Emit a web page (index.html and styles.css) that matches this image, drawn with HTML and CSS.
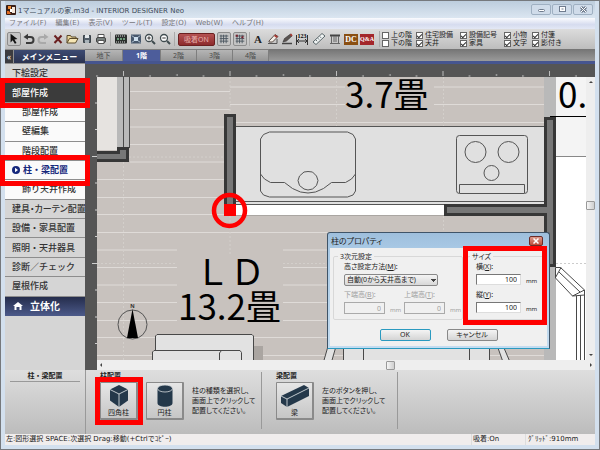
FILE: index.html
```html
<!DOCTYPE html>
<html lang="ja">
<head>
<meta charset="utf-8">
<title>1マニュアルの家.m3d - INTERIOR DESIGNER Neo</title>
<link rel="stylesheet" href="styles.css">
</head>
<body>
<div class="window">
  <header class="titlebar">
    <svg class="app-icon" width="10" height="10" viewBox="0 0 10 10" aria-hidden="true"><rect width="10" height="10" rx="1" fill="#3a2018"/><rect x="2" y="1" width="3" height="3" fill="#f08a30"/><rect x="6" y="2" width="3" height="6" fill="#f4e6d8"/><path d="M1 9V6h2l2 3z" fill="#e06a20"/><path d="M4 4h2v3H4z" fill="#fff"/></svg>
    <h1>1マニュアルの家.m3d - INTERIOR DESIGNER Neo</h1>
    <div class="window-buttons">
      <button aria-label="最小化"><svg width="18" height="9" viewBox="0 0 18 9"><rect x="6.500" y="4.500" width="6" height="2" rx="1" fill="#fff" stroke="#6f7c8e"/></svg></button>
      <button aria-label="元に戻す"><svg width="18" height="9" viewBox="0 0 18 9"><rect x="6.500" y="1.500" width="6" height="5" fill="#fff" stroke="#6f7c8e"/><path d="M8.500 4h2" stroke="#6f7c8e"/></svg></button>
      <button aria-label="閉じる"><svg width="18" height="9" viewBox="0 0 18 9"><path d="M7 2l5 5M12 2L7 7" stroke="#6f7c8e" stroke-width="3"/><path d="M7 2l5 5M12 2L7 7" stroke="#fff"/></svg></button>
    </div>
  </header>

  <nav class="menubar" aria-label="メニュー">
    <a href="#">ファイル(F)</a><a href="#">編集(E)</a><a href="#">表示(V)</a><a href="#">ツール(T)</a><a href="#">設定(O)</a><a href="#">Web(W)</a><a href="#">ヘルプ(H)</a>
  </nav>

  <div class="toolbar">
    <div class="tools tools-file">
      <button class="tool pressed" aria-label="選択"><svg viewBox="0 0 14 14"><path d="M3 1l8 6-3.500.6 2.500 4-2 1-2.500-4L3 11z" fill="#111"/></svg></button>
      <button class="tool" aria-label="元に戻す"><svg viewBox="0 0 14 14"><path d="M4 5h4.500a2.600 2.600 0 0 1 0 6H4" fill="none" stroke="#3a3a3a" stroke-width="2"/><path d="M1.500 5L6 1.800v6z" fill="#3a3a3a"/></svg></button>
      <button class="tool" aria-label="やり直し"><svg viewBox="0 0 14 14"><path d="M10 5H5.500a2.600 2.600 0 0 0 0 6H10" fill="none" stroke="#a9a9a9" stroke-width="2"/><path d="M12.500 5L8 1.800v6z" fill="#a9a9a9"/></svg></button>
      <button class="tool" aria-label="削除"><svg viewBox="0 0 14 14"><path d="M3.500 3.500l7 7.500M10.500 3.500l-7 7.500" stroke="#6b2020" stroke-width="2"/></svg></button>
      <button class="tool" aria-label="開く"><svg viewBox="0 0 14 14"><path d="M2 11V3.500h3.500l1 1.500H11v2" fill="#e8d49a" stroke="#5a4a2a"/><path d="M2 11l2.500-4.500H13L10.500 11z" fill="#f6e6b4" stroke="#5a4a2a"/></svg></button>
      <button class="tool" aria-label="保存"><svg viewBox="0 0 14 14"><path d="M3.500 3.500h7v7h-7z" fill="#55606a" stroke="#3a4248"/><path d="M5 3h4v3H5z" fill="#e4e8ea"/><path d="M5 8h4v3H5z" fill="#aab4ba"/></svg></button>
      <button class="tool" aria-label="印刷"><svg viewBox="0 0 14 14"><path d="M4 2.500h6V6H4z" fill="#fff" stroke="#555"/><rect x="2.500" y="5.500" width="9" height="5" rx="1.500" fill="#77807e" stroke="#444"/><path d="M4 8.500h6v3H4z" fill="#fff" stroke="#555"/></svg></button>
    </div>
    <div class="tools tools-view">
      <button class="tool" aria-label="3D表示"><svg viewBox="0 0 14 14"><rect x="1" y="2.500" width="12" height="9" rx="1" fill="#2b2f2d"/><path d="M2 4h10M2 10h10" stroke="#ddd" stroke-dasharray="1 1"/><path d="M3 6h2v2H3zM6 6h2v2H6zM9 6h2v2H9z" fill="#6d9a7a"/></svg></button>
      <button class="tool" aria-label="全体表示"><svg viewBox="0 0 14 14"><rect x="2" y="2.500" width="10" height="9" fill="#48586c"/><rect x="5" y="5" width="4" height="4" fill="#cfe0ee"/><path d="M3 3.500l2 2M11 3.500l-2 2M3 10.500l2-2M11 10.500l-2-2" stroke="#cfe0ee"/></svg></button>
      <button class="tool" aria-label="拡大"><svg viewBox="0 0 14 14"><circle cx="6" cy="6" r="3.500" fill="#fff" stroke="#3f4b4f" stroke-width="1.300"/><path d="M9 9l3 3" stroke="#3f4b4f" stroke-width="2"/><path d="M4.300 6h3.400M6 4.300v3.400" stroke="#333"/></svg></button>
      <button class="tool" aria-label="縮小"><svg viewBox="0 0 14 14"><circle cx="6" cy="6" r="3.500" fill="#fff" stroke="#3f4b4f" stroke-width="1.300"/><path d="M9 9l3 3" stroke="#3f4b4f" stroke-width="2"/><path d="M4.300 6h3.400" stroke="#333"/></svg></button>
    </div>
    <div class="tools tools-snap">
      <button class="snap">吸着ON</button>
      <button class="tool pressed" aria-label="グリッド"><svg viewBox="0 0 14 14"><path d="M2 3.500h10M2 6.500h10M2 9.500h10M3.500 2v10M6.500 2v10M9.500 2v10" stroke="#46525c"/></svg></button>
      <button class="tool pressed" aria-label="グリッド吸着"><svg viewBox="0 0 14 14"><path d="M2 3.500h10M2 6.500h10M2 9.500h10M3.500 2v10M6.500 2v10M9.500 2v10" stroke="#46525c"/><path d="M2 2h2.500v2.500H2zM8 5l3-2v4z" fill="#7a2430"/></svg></button>
    </div>
    <div class="tools tools-draw">
      <button class="tool letter">A</button>
      <button class="tool" aria-label="消しゴム"><svg viewBox="0 0 14 14"><path d="M2 11.500h9V7" fill="none" stroke="#555"/><path d="M3 9l6-6.500 3 2L6.500 10H3z" fill="#f4efe8" stroke="#5a4b44"/><path d="M9 2.500l3 2L10.500 6 8 4z" fill="#a63a34"/></svg></button>
      <button class="tool" aria-label="ペン"><svg viewBox="0 0 14 14"><path d="M2 11.500h10" stroke="#444" stroke-width="1.500"/><path d="M3 10l1.500-3.500 6-4.500 1.500 2-5.500 5z" fill="#5a5350" stroke="#333" stroke-width=".6"/><path d="M10.500 2l1.500 2" stroke="#a63a34" stroke-width="1.500"/></svg></button>
      <button class="tool" aria-label="寸法"><svg viewBox="0 0 14 14"><path d="M1.500 3v10M12.500 3v10M1.500 9h11" fill="none" stroke="#333"/><path d="M4 7l-2 2 2 2M10 7l2 2-2 2" fill="none" stroke="#333"/><text x="7" y="6" class="dimension" text-anchor="middle">123</text></svg></button>
    </div>
    <div class="tools tools-misc">
      <button class="tool" aria-label="定規"><svg viewBox="0 0 14 14"><path d="M1 10l9-8.500 3 2.500-9 8.500z" fill="#f0f4f4" stroke="#586468"/><path d="M4 8l1 1.200M6 6.300l1 1.200M8 4.600l1 1.200" stroke="#586468"/></svg></button>
      <button class="tool" aria-label="一覧"><svg viewBox="0 0 14 14"><rect x="2" y="2.500" width="10" height="2" fill="#444"/><path d="M3.500 4v7M6 4v6M8 4v6M10.500 4v7M2 11.500h10" stroke="#666" fill="none"/></svg></button>
      <button class="tool badge dc">DC</button>
      <button class="tool badge qa">Q&amp;A</button>
    </div>
    <fieldset class="layers" aria-label="表示項目">
      <label><input type="checkbox">上の階</label>
      <label><input type="checkbox" checked>住宅設備</label>
      <label><input type="checkbox" checked>設備記号</label>
      <label><input type="checkbox" checked>小物</label>
      <label><input type="checkbox" checked>付箋</label>
      <label><input type="checkbox">下の階</label>
      <label><input type="checkbox" checked>天井</label>
      <label><input type="checkbox" checked>家具</label>
      <label><input type="checkbox" checked>文字</label>
      <label><input type="checkbox" checked>影付き</label>
    </fieldset>
  </div>

  <div class="main">
    <aside class="sidebar">
      <div class="side-head"><button aria-label="折りたたむ">«</button><h2>メインメニュー</h2></div>
      <nav class="side-menu" aria-label="メインメニュー">
        <a href="#">下絵設定</a>
        <a href="#" class="open">部屋作成</a>
        <a href="#" class="sub">部屋作成</a>
        <a href="#" class="sub">壁編集</a>
        <a href="#" class="sub">階段配置</a>
        <a href="#" class="sub current"><svg width="8" height="8" viewBox="0 0 8 8" aria-hidden="true"><circle cx="4" cy="4" r="4" fill="#15277c"/><path d="M3 1.800L6 4 3 6.200z" fill="#fff"/></svg>柱・梁配置</a>
        <a href="#" class="sub">飾り天井作成</a>
        <a href="#" class="tight">建具・カーテン配置</a>
        <a href="#">設備・家具配置</a>
        <a href="#">照明・天井器具</a>
        <a href="#">診断／チェック</a>
        <a href="#">屋根作成</a>
        <a href="#" class="solid"><svg width="10" height="8" viewBox="0 0 10 8" aria-hidden="true"><path d="M5 0l5 4H8.500v4h-2V5h-3v3h-2V4H0z" fill="#fff"/></svg>立体化</a>
      </nav>
    </aside>

    <section class="workspace">
      <div class="tabs" role="tablist">
        <button role="tab">地下</button><button role="tab" class="active" aria-selected="true">1階</button><button role="tab">2階</button><button role="tab">3階</button><button role="tab">4階</button>
      </div>
      <div class="editor">
        <svg class="ruler-top" aria-hidden="true">
          <defs><pattern id="ticks-x" x="38" width="106.500" height="13" patternUnits="userSpaceOnUse"><path d="M.5 7v5M27 11v2M54 10v2M80.500 11v2" stroke="#bcbcbc"/></pattern></defs>
          <rect width="100%" height="13" fill="url(#ticks-x)"/>
        </svg>
        <svg class="ruler-left" aria-hidden="true">
          <defs><pattern id="ticks-y" y="79" width="12" height="107" patternUnits="userSpaceOnUse"><path d="M7 .5h5M10 27h2M10 54h2M10 80.500h2" stroke="#cfcfcf"/></pattern></defs>
          <rect width="12" height="100%" fill="url(#ticks-y)"/>
        </svg>
        <svg class="plan" viewBox="97 77 489 283" preserveAspectRatio="xMinYMin slice" role="img" aria-label="間取り図">
          <rect x="97" y="77" width="489" height="283" fill="#c8c2be"/>
          <g stroke="#dfdbd8">
            <path d="M130 91.500h100M130 109.500h100M130 127h95M130 144.500h95M130 162h95M97 179.500h127M97 197.500h127M97 214.500h127M97 232.500h447M97 250h80M283 250h50M97 267.500h80M283 267.500h50M97 285h80M283 285h50M97 302.500h80M283 302.500h50M97 320.500h80M283 320.500h50M97 337.500h447M97 355.500h447"/>
            <path d="M230 87h115M434 87h110M230 104.500h115M434 104.500h110M230 122.500h314"/>
            <path d="M230 77v50M336.500 77v50M443.500 77v50M123.500 162v198M230 216v38M443.500 216v20M97 157h130M97 263.500h80M283 263.500h45" stroke="#d3cfcb" stroke-dasharray="2 2"/>
          </g>
          <rect x="97" y="77" width="20" height="73" fill="#e6e3e0"/>
          <rect x="117" y="77" width="12" height="72" fill="#b9b9b9"/>
          <path d="M123.500 77v71M129.500 77v71" stroke="#4a4a4a"/>
          <path d="M94 152.500h24.500v-4h9v12H94z" fill="#777" stroke="#373737" stroke-width="3"/>
          <rect x="544" y="77" width="12" height="283" fill="#b9b9b9"/>
          <rect x="556" y="77" width="30" height="80" fill="#f4f4f4"/>
          <rect x="556" y="157" width="30" height="203" fill="#fff"/>
          <path d="M556 156.500h30" stroke="#888"/>
          <path d="M556 263.500h30" stroke="#ccc" stroke-dasharray="2 2"/>
          <path d="M550 116.500h36" stroke="#000"/>
          <rect x="236" y="126" width="308" height="79" fill="#e0e0e0"/>
          <path d="M236 126.500h308M236 201.500h308M236 204.500h308" stroke="#555" fill="none"/>
          <rect x="236" y="205" width="208" height="10" fill="#fff"/>
          <path d="M236 215.500h208" stroke="#aaa6a2"/>
          <path d="M545.500 118.500h9v147h-9v-51h-100v-9h100z" fill="#777" stroke="#373737" stroke-width="3"/>
          <rect x="225.500" y="115.500" width="9" height="91" fill="#777" stroke="#373737" stroke-width="3"/>
          <g fill="none" stroke="#555">
            <path d="M260.500 139l3-4.500 6-2.500h78l5.500 2.500 2.500 4.500v52l-2.500 4-5.500 2h-78l-6-2-3-4z"/>
            <path d="M260.500 174l4 5 6 3.500h14l8 6 8 3.500 7.500 1 7.500-1 8-3.500 8-6h14l6-3.500 4-5"/>
            <path d="M304 172l-4.500 4-1.500 4.500 1.500 5 4.500 3.500 4 1 4.500-1 4-3.500 1.500-5-1.500-4.500-4-4-4.500-.5z"/>
            <rect x="456.500" y="135.500" width="71" height="58" rx="3"/>
            <path d="M459.500 193v-8.500h65v8.500"/>
            <circle cx="475.500" cy="152" r="10.500"/><circle cx="508.500" cy="152" r="10.500"/><circle cx="491.500" cy="173" r="7.500"/>
          </g>
          <circle cx="132.500" cy="324.500" r="14.500" fill="none" stroke="#555"/>
          <path d="M132.500 309l5.500 29h-11z" fill="#000"/>
          <text x="132.500" y="308" class="north" text-anchor="middle">N</text>
          <rect x="253" y="346" width="10" height="14" fill="#aaa5a1"/>
          <g fill="#e2e2e2" stroke="#484848">
            <path d="M155.500 362v-26l1.500-1.500h95l1.500 1.500v26z"/>
            <path d="M152.500 362v-10l1.500-1.500h86l1.500 2V362z"/>
            <path d="M219.500 362v-9l2-2.500" fill="none"/>
            <path d="M323.500 362l4-14h8l-4 14z"/>
            <path d="M343.500 345h146v17h-146zM363.500 345h106v17h-106z"/>
            <path d="M498 348h6l6 14h-7z"/>
            <path d="M555.500 267.500h5l24 22.500v5l-12 1-17-18z" fill="#fff"/>
            <path d="M561 267.500l-5.500 10M584.500 290l-12 6M559 272l21 20M576.500 296v66M580.500 295v67M584.500 295v67" fill="none"/>
          </g>
          <text x="345" y="108" class="room">3.7畳</text>
          <text x="558" y="108" class="room">0.</text>
          <text x="195" y="285" class="room">ＬＤ</text>
          <text x="178" y="320" class="room">13.2畳</text>
          <rect x="224" y="204" width="12" height="12" fill="#f00"/>
          <circle cx="229.500" cy="210.500" r="15.500" fill="none" stroke="#f00" stroke-width="4.500"/>
        </svg>
        <div class="scroll-y" aria-hidden="true"><i class="arrow up"></i><i class="thumb"></i><i class="arrow down"></i></div>
        <div class="scroll-x" aria-hidden="true"><i class="arrow left"></i><i class="thumb"></i><i class="arrow right"></i></div>
      </div>

      <form class="dialog" role="dialog" aria-labelledby="dialog-title">
        <div class="dialog-title"><h2 id="dialog-title">柱のプロパティ</h2><button type="button" aria-label="閉じる"><svg width="6" height="6" viewBox="0 0 6 6"><path d="M.5.5l5 5M5.500.5l-5 5" stroke="#fff" stroke-width="1.500"/></svg></button></div>
        <div class="dialog-body">
          <div class="groups">
            <fieldset class="group-3d">
              <legend>3次元設定</legend>
              <label for="method">高さ設定方法(<u>M</u>):</label>
              <select id="method"><option>自動(0から天井高まで)</option></select>
              <div class="pair">
                <div class="disabled"><label for="low">下端高(<u>B</u>):</label><div class="measure"><input id="low" value="0" disabled><span>mm</span></div></div>
                <div class="disabled"><label for="high">上端高(<u>T</u>):</label><div class="measure"><input id="high" value="0" disabled><span>mm</span></div></div>
              </div>
            </fieldset>
            <fieldset class="group-size">
              <legend>サイズ</legend>
              <label for="size-x">横(<u>X</u>):</label>
              <div class="measure"><input id="size-x" value="100"><span>mm</span></div>
              <label for="size-y">縦(<u>Y</u>):</label>
              <div class="measure"><input id="size-y" value="100"><span>mm</span></div>
            </fieldset>
          </div>
          <div class="actions"><button type="button" class="default">OK</button><button type="button">キャンセル</button></div>
        </div>
        <div class="mark mark-size"></div>
      </form>
    </section>
    <div class="mark mark-room"></div>
    <div class="mark mark-column"></div>
  </div>

  <div class="parts">
    <div class="parts-caption"><h2>柱・梁配置</h2></div>
    <section class="part-group">
      <h3>柱配置</h3>
      <div class="part-row">
        <div class="part-buttons">
          <button class="part"><svg width="20" height="24" viewBox="0 0 20 24" aria-hidden="true"><path d="M10 1l9 4.500v11L10 23l-9-6.500v-11z" fill="#24384a"/><path d="M1 5.500l9 4.500 9-4.500M10 10v13" fill="none" stroke="#e8ecee" stroke-width=".8"/></svg>四角柱<span class="mark mark-part"></span></button>
          <button class="part"><svg width="20" height="24" viewBox="0 0 20 24" aria-hidden="true"><path d="M2.500 5v14c0 5 15 5 15 0V5z" fill="#24384a"/><ellipse cx="10" cy="4.500" rx="7.500" ry="3.500" fill="#24384a" stroke="#d8dcde" stroke-width=".8"/></svg>円柱</button>
        </div>
        <p>柱の種類を選択し、<br>画面上でクリックして<br>配置してください。</p>
      </div>
    </section>
    <section class="part-group">
      <h3>梁配置</h3>
      <div class="part-row">
        <div class="part-buttons">
          <button class="part"><svg width="30" height="24" viewBox="0 0 30 24" aria-hidden="true"><path d="M1 12L24 1l5 3v8L7 23l-6-4z" fill="#24384a"/><path d="M1 12l6 3 22-11M7 15v8" fill="none" stroke="#e8ecee" stroke-width=".8"/></svg>梁</button>
        </div>
        <p>左のボタンを押し、<br>画面上でクリックして<br>配置してください。</p>
      </div>
    </section>
  </div>

  <footer class="status">
    <span class="hint">左:図形選択 SPACE:次選択 Drag:移動(+Ctrlでｺﾋﾟｰ)</span>
    <span class="snap-state">吸着:On</span>
    <span class="grid-state">ｸﾞﾘｯﾄﾞ:910mm</span>
  </footer>
</div>
</body>
</html>
```
FILE: styles.css
```css
* { box-sizing: border-box; }
body { margin: 0; font: 7px/10px "Noto Sans", "Noto Sans CJK JP", sans-serif; color: #222; }
button, input, select { font: inherit; color: inherit; margin: 0; padding: 0; border: 0; background: none; }
h1, h2, h3, p, fieldset, legend { margin: 0; padding: 0; border: 0; font-size: inherit; font-weight: normal; }
a { color: inherit; text-decoration: none; }
svg { display: block; }

.window { display: flex; flex-direction: column; min-height: 100vh; padding: 0 4px 4px; border: 1px solid #76797d; background: #d3e0ee; }
.titlebar, .menubar, .status { font-family: "DejaVu Sans", "Noto Sans CJK JP", sans-serif; }

.titlebar { display: flex; align-items: center; gap: 2px; height: 17px; padding-left: 1px; background: linear-gradient(#bdcddd, #dbe6f1); color: #3d4a58; }
.titlebar h1 { flex: 1; padding-top: 2px; white-space: nowrap; }
.window-buttons { display: flex; gap: 1px; padding-right: 2px; }
.window-buttons button { border: 1px solid #9fb0c2; border-radius: 2px; background: #d0dcea; }

.menubar { display: flex; gap: 9px; height: 11px; padding-left: 4px; background: linear-gradient(#fafbfe, #d6dcef 60%, #e3e8f5); color: #77777c; line-height: 11px; white-space: nowrap; }

.toolbar { display: flex; align-items: center; height: 20px; padding-left: 2px; background: linear-gradient(#dcdcdc, #bdbdbd); }
.tools { display: flex; flex: none; justify-content: space-between; align-items: center; }
.tools + .tools { margin-left: 2px; }
.tools-file { width: 101px; }
.tools-view { width: 62px; padding-left: 3px; border-left: 1px solid #aaa; }
.tools-snap { width: 73px; padding-left: 3px; border-left: 1px solid #aaa; }
.tools-draw { width: 60px; padding-left: 1px; border-left: 1px solid #aaa; }
.tools-misc { width: 63px; padding-left: 1px; }
.tool { width: 14px; height: 14px; }
.tool svg { width: 100%; height: 100%; }
.pressed { border: 1px solid #8c8c8c; border-radius: 2px; background: #c4c4c4; }
.snap { width: 37px; height: 13px; border: 1px solid #6b2020; border-radius: 2px; background: linear-gradient(#b55252, #8c2a2c); color: #e8b0ac; line-height: 11px; }
.letter { font: bold 11px/14px "Liberation Serif", serif; }
.dimension { font: bold 6px "Liberation Serif", serif; }
.badge { height: 11px; color: #fff; font: bold 8px/11px "Liberation Serif", serif; }
.dc { background: #8a4f12; }
.qa { background: #a3262b; font-size: 6px; }
.layers { display: grid; grid-template-columns: 34px 44px 44px 28px 30px; grid-auto-rows: 8px; margin-left: 5px; padding-left: 2px; border-left: 1px solid #aaa; line-height: 8px; }
.layers label { display: flex; align-items: center; gap: 2px; white-space: nowrap; }
.layers input { appearance: none; display: grid; place-items: center; flex: none; width: 7px; height: 7px; border: 1px solid #666; background: #fff; }
.layers input:checked::before { content: ""; width: 4px; height: 2px; border: solid #333; border-width: 0 0 1px 1px; transform: rotate(-45deg); }

.main { position: relative; display: flex; flex: 1; }
.sidebar { display: flex; flex: none; flex-direction: column; width: 80px; background: #d5d5d5; }
.side-head { display: flex; gap: 1px; height: 15px; padding: 1px 0; background: #909090; color: #fff; line-height: 13px; }
.side-head button { width: 8px; background: #3c3c40; font-size: 8px; line-height: 10px; }
.side-head h2 { flex: 1; background: linear-gradient(#3c4a72, #2b3350); font-size: 8px; font-weight: bold; text-align: center; }
.side-menu { display: grid; grid-auto-rows: 1fr; height: 252px; color: #333; font-size: 9px; font-weight: 500; line-height: 12px; }
.side-menu a { display: flex; align-items: center; padding-left: 7px; border-bottom: 1px solid #8d8d8d; white-space: nowrap; }
.side-menu .tight { font-feature-settings: "palt"; }
.side-menu .open { background: #3b3b3b; color: #fff; }
.side-menu .sub { padding-left: 17px; background: #fafafa; }
.side-menu .current { gap: 3px; padding-left: 7px; color: #15277c; font-weight: bold; }
.side-menu .solid { gap: 7px; padding-left: 8px; border: 0; background: linear-gradient(#252d4c, #4c5a8a); color: #fff; font-size: 10px; font-weight: bold; }

.workspace { position: relative; display: flex; flex: 1; flex-direction: column; min-width: 0; }
.tabs { display: flex; height: 15px; border-bottom: 3px solid #46558f; background: linear-gradient(#747474, #9a9a9a); }
.tabs button { width: 36px; border: 1px solid #7e7e7e; border-width: 1px 1px 0 0; background: linear-gradient(#b5b5b5, #969696); color: #4a4a4a; line-height: 11px; }
.tabs button:nth-child(-n+2) { width: 38px; }
.tabs .active { background: #4d5d9b; color: #fff; font-weight: bold; }

.editor { display: grid; flex: 1; grid-template-columns: 12px 1fr 9px; grid-template-rows: 13px 1fr 10px; background: #555; }
.ruler-top { grid-area: 1 / 1 / 2 / 4; width: 100%; height: 13px; }
.ruler-left { grid-area: 2 / 1 / 4 / 2; width: 12px; height: 100%; }
.plan { grid-area: 2 / 2; width: 100%; height: 100%; min-height: 0; }
.room { font: 35px "Noto Sans CJK JP", sans-serif; fill: #000; }
.north { font: bold 6px "Liberation Sans", sans-serif; fill: #333; }
.scroll-x, .scroll-y { display: flex; align-items: center; justify-content: space-between; background: #eee; }
.scroll-x { grid-area: 3 / 2 / 4 / 4; padding: 0 3px; }
.scroll-y { grid-area: 2 / 3; flex-direction: column; padding: 4px 0; }
.scroll-x .thumb { margin-left: 88px; }
.scroll-y .thumb { margin-bottom: 26px; }
.thumb { width: 9px; height: 9px; border: 1px solid #999; border-radius: 1px; background: linear-gradient(90deg, #f5f5f5, #cfcfcf); }
.arrow { border: 2px solid transparent; }
.up { border-top: 0; border-bottom-color: #444; }
.down { border-bottom: 0; border-top-color: #444; }
.left { border-left: 0; border-right-color: #444; }
.right { border-right: 0; border-left-color: #444; }

.dialog { position: absolute; left: 242px; top: 183px; width: 223px; padding: 0 2px 2px; border: 1px solid #3f5468; border-bottom-color: #2a9ac0; border-radius: 3px 3px 0 0; background: linear-gradient(#9ebfdd, #a8c8e4 15px, #c4dcf0); }
.dialog-title { display: flex; align-items: center; justify-content: space-between; height: 15px; padding: 0 4px 0 1px; color: #222; }
.dialog-title button { display: grid; place-items: center; width: 14px; height: 10px; border: 1px solid #6d2c28; border-radius: 2px; background: linear-gradient(#dc9a8c, #c04a38); }
.dialog-title h2 { font-size: 8px; font-feature-settings: "palt"; }
.dialog-body { padding: 4px 3px 5px; background: #f0f0f0; }
.groups { display: flex; gap: 4px; height: 70px; }
.groups fieldset { min-width: 0; height: 68px; padding: 0 0 0 10px; border: 1px solid #d8d8d8; border-radius: 2px; font-feature-settings: "palt"; }
.groups legend { height: 9px; margin-left: -6px; padding: 0 2px; line-height: 9px; }
.group-3d { flex: none; width: 130px; }
.groups .group-size { flex: 1; padding: 0 0 0 8px; }
.groups label { display: block; height: 10px; margin-top: 1px; line-height: 10px; white-space: nowrap; }
.groups select { width: 94px; height: 12px; margin: 2px 0 3px; padding-left: 2px; appearance: none; border: 1px solid #888; border-radius: 2px; background: linear-gradient(90deg, #444, #444) 86px 4px / 5px 1px no-repeat, linear-gradient(90deg, #444, #444) 87px 5px / 3px 1px no-repeat, linear-gradient(90deg, #444, #444) 88px 6px / 1px 1px no-repeat, linear-gradient(#f4f4f4, #d8d8d8); line-height: 10px; }
.pair { display: flex; }
.pair > div { flex: none; width: 60px; }
.pair > div + div { width: 58px; }
.measure { display: flex; align-items: end; gap: 5px; margin-top: 2px; line-height: 8px; }
.measure span { font-size: 6px; }
.group-size .measure { margin-bottom: 5px; }
.measure input { flex: none; width: 41px; height: 12px; padding-right: 3px; border: 1px solid #aaa; background: #fff; text-align: right; }
.group-size .measure input { width: 45px; height: 11px; border-color: #777 #ddd #ddd #777; }
.disabled { color: #a0a0a0; }
.disabled .measure input { background: #f0f0f0; }
.actions { display: flex; justify-content: center; gap: 16px; margin-top: 7px; }
.actions button { width: 51px; height: 12px; border: 1px solid #888; border-radius: 2px; background: linear-gradient(#f4f4f4, #d4d4d4); line-height: 10px; font-feature-settings: "palt"; }
.actions .default { border-color: #2a9ac0; }

.mark { position: absolute; border: 5px solid #f00; pointer-events: none; }
.mark-room { left: -5px; top: 29px; width: 90px; height: 30px; }
.mark-column { left: -5px; top: 106px; width: 90px; height: 31px; }
.mark-size { left: 135px; top: 13px; width: 84px; height: 79px; }
.mark-part { left: -6px; top: -6px; width: 48px; height: 48px; }

.parts { display: flex; height: 64px; background: linear-gradient(#dedede, #bcbcbc); }
.parts-caption { flex: none; width: 81px; padding: 1px 5px 0; border-right: 1px solid #999; font-weight: bold; text-align: center; }
.parts-caption h2 { border-bottom: 1px solid #999; font-weight: bold; line-height: 10px; }
.part-group { width: 176px; margin: 2px 0 5px; padding-left: 14px; border-right: 1px solid #999; }
.part-group + .part-group { width: 136px; }
.part-group h3 { height: 10px; font-weight: bold; line-height: 8px; }
.part-row, .part-buttons { display: flex; gap: 8px; }
.part { position: relative; display: flex; flex-direction: column; align-items: center; justify-content: end; width: 38px; height: 38px; border: 1px solid #8a8a8a; border-width: 1px 2px 2px 1px; border-radius: 1px; background: linear-gradient(#e6e6e6, #c6c6c6); line-height: 10px; }
.part-row p { padding-top: 4px; line-height: 10px; white-space: nowrap; font-feature-settings: "palt"; }

.status { display: flex; height: 11px; background: #f0eded; line-height: 11px; white-space: nowrap; }
.hint { flex: 1; padding-left: 1px; }
.snap-state { width: 54px; padding-left: 1px; border-left: 1px solid #ddd; }
.grid-state { width: 70px; padding-left: 2px; border-left: 1px solid #ddd; }
```
